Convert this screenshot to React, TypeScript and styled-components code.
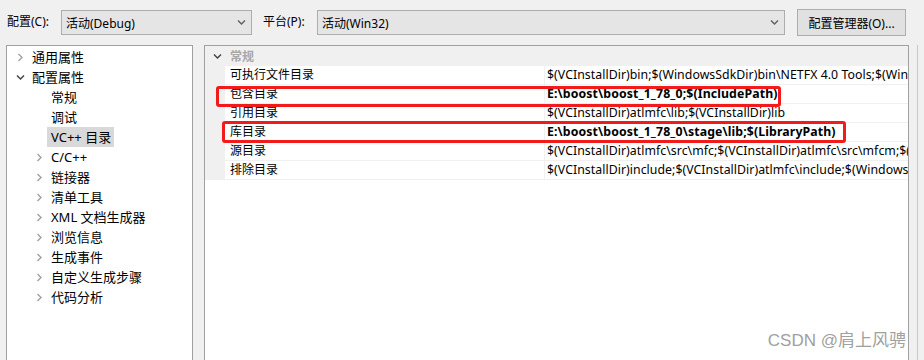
import styled, { createGlobalStyle } from "styled-components"

const GlobalStyle = createGlobalStyle`
  html, body {
    margin: 0;
    padding: 0;
    background: #f0f0f0;
  }
  body {
    font-family: "Noto Sans", "Noto Sans CJK SC", sans-serif;
    font-size: 12px;
    color: #000;
  }
`

const treeItems: { label: string; level: number; arrow: "open" | "closed" | "none"; selected?: boolean }[] = [
  { label: "通用属性", level: 0, arrow: "closed" },
  { label: "配置属性", level: 0, arrow: "open" },
  { label: "常规", level: 1, arrow: "none" },
  { label: "调试", level: 1, arrow: "none" },
  { label: "VC++ 目录", level: 1, arrow: "none", selected: true },
  { label: "C/C++", level: 1, arrow: "closed" },
  { label: "链接器", level: 1, arrow: "closed" },
  { label: "清单工具", level: 1, arrow: "closed" },
  { label: "XML 文档生成器", level: 1, arrow: "closed" },
  { label: "浏览信息", level: 1, arrow: "closed" },
  { label: "生成事件", level: 1, arrow: "closed" },
  { label: "自定义生成步骤", level: 1, arrow: "closed" },
  { label: "代码分析", level: 1, arrow: "closed" },
]

const props: { name: string; value: string; bold?: boolean }[] = [
  { name: "可执行文件目录", value: "$(VCInstallDir)bin;$(WindowsSdkDir)bin\\NETFX 4.0 Tools;$(WindowsSdkDir)bin;$(VSInstallDir)Common7\\Tools\\bin" },
  { name: "包含目录", value: "E:\\boost\\boost_1_78_0;$(IncludePath)", bold: true },
  { name: "引用目录", value: "$(VCInstallDir)atlmfc\\lib;$(VCInstallDir)lib" },
  { name: "库目录", value: "E:\\boost\\boost_1_78_0\\stage\\lib;$(LibraryPath)", bold: true },
  { name: "源目录", value: "$(VCInstallDir)atlmfc\\src\\mfc;$(VCInstallDir)atlmfc\\src\\mfcm;$(VCInstallDir)atlmfc\\src\\atl" },
  { name: "排除目录", value: "$(VCInstallDir)include;$(VCInstallDir)atlmfc\\include;$(WindowsSdkDir)include;$(FrameworkSDKDir)include" },
]

const Chevron = (p: { open?: boolean; color: string }) => (
  <svg width="9" height="9" viewBox="0 0 9 9">
    {p.open ? (
      <path d="M1 2.5 L4.5 6 L8 2.5" fill="none" stroke={p.color} strokeWidth="1.4" />
    ) : (
      <path d="M2.5 1 L6 4.5 L2.5 8" fill="none" stroke={p.color} strokeWidth="1.4" />
    )}
  </svg>
)

export default function App() {
  return (
    <Page>
      <GlobalStyle />
      <TopBar>
        <Label>配置(C):</Label>
        <Select width={191}>
          <span>活动(Debug)</span>
          <Chevron open color="#606060" />
        </Select>
        <Label>平台(P):</Label>
        <Select width={468}>
          <span>活动(Win32)</span>
          <Chevron open color="#606060" />
        </Select>
        <Button>配置管理器(O)...</Button>
      </TopBar>

      <Body>
        <TreePanel>
          {treeItems.map(item => (
            <TreeRow key={item.label} level={item.level}>
              <ArrowSlot>
                {item.arrow !== "none" && <Chevron open={item.arrow === "open"} color={item.arrow === "open" ? "#404040" : "#a0a0a0"} />}
              </ArrowSlot>
              <TreeLabel selected={item.selected}>{item.label}</TreeLabel>
            </TreeRow>
          ))}
        </TreePanel>

        <GridPanel>
          <CategoryRow>
            <ArrowSlot>
              <Chevron open color="#404040" />
            </ArrowSlot>
            <CategoryLabel>常规</CategoryLabel>
          </CategoryRow>
          {props.map(p => (
            <PropRow key={p.name}>
              <Margin />
              <NameCell>{p.name}</NameCell>
              <ValueCell bold={p.bold}>{p.value}</ValueCell>
            </PropRow>
          ))}
          <Highlight style={{ left: 11, top: 40, width: 565, height: 21 }} />
          <Highlight style={{ left: 17, top: 75, width: 624, height: 22 }} />
          <Watermark>CSDN @肩上风骋</Watermark>
        </GridPanel>
        <WindowEdge />
      </Body>
    </Page>
  )
}

const Page = styled.div`
  width: 924px;
  height: 360px;
  background: #f0f0f0;
  overflow: hidden;
  display: flex;
  flex-direction: column;
`

const TopBar = styled.div`
  height: 45px;
  display: flex;
  align-items: center;
  padding: 0 0 0 7px;
  box-sizing: border-box;
  flex: none;
`

const Label = styled.div`
  width: 54px;
  font-size: 12px;
  line-height: 16px;
  margin-top: -1px;
`

const Select = styled.div<{ width: number }>`
  width: ${p => p.width}px;
  height: 25px;
  box-sizing: border-box;
  border: 1px solid #adadad;
  background: #e5e5e5;
  display: flex;
  align-items: center;
  justify-content: space-between;
  padding: 0 5px 0 4px;
  margin-right: 11px;
  font-size: 12px;
`

const Button = styled.div`
  width: 109px;
  height: 27px;
  box-sizing: border-box;
  border: 1px solid #adadad;
  background: #e1e1e1;
  display: flex;
  align-items: center;
  justify-content: center;
  font-size: 12px;
  margin-left: 1px;
`

const Body = styled.div`
  flex: 1;
  display: flex;
  padding-left: 6px;
  min-height: 0;
`

const TreePanel = styled.div`
  width: 187px;
  flex: none;
  box-sizing: border-box;
  border: 1px solid #a0a0a0;
  border-bottom: none;
  background: #fff;
  padding-top: 1px;
`

const TreeRow = styled.div<{ level: number }>`
  height: 20px;
  display: flex;
  align-items: center;
  padding-left: ${p => 9 + p.level * 19}px;
`

const ArrowSlot = styled.div`
  width: 14px;
  display: flex;
  align-items: center;
  flex: none;
`

const TreeLabel = styled.div<{ selected?: boolean }>`
  font-size: 13px;
  line-height: 20px;
  padding: 0 3px 0 2px;
  margin-left: ${p => (p.selected ? "-2px" : "0")};
  padding-left: ${p => (p.selected ? "4px" : "2px")};
  background: ${p => (p.selected ? "#d9d9d9" : "transparent")};
  white-space: nowrap;
`

const GridPanel = styled.div`
  position: relative;
  margin-left: 11px;
  width: 705px;
  flex: none;
  box-sizing: border-box;
  border: 1px solid #a0a0a0;
  border-bottom: none;
  background: #fff;
  overflow: hidden;
`

const CategoryRow = styled.div`
  height: 20px;
  background: #f0f0f0;
  display: flex;
  align-items: center;
  padding-left: 8px;
`

const CategoryLabel = styled.div`
  color: #a8a8a8;
  font-size: 12px;
  font-weight: 700;
  margin-left: 3px;
`

const PropRow = styled.div`
  height: 19px;
  display: flex;
`

const Margin = styled.div`
  width: 20px;
  flex: none;
  background: #f0f0f0;
`

const NameCell = styled.div`
  width: 320px;
  flex: none;
  box-sizing: border-box;
  padding-left: 5px;
  line-height: 18px;
  font-size: 12px;
  border-bottom: 1px solid #f0f0f0;
  border-right: 1px solid #f0f0f0;
  white-space: nowrap;
`

const ValueCell = styled.div<{ bold?: boolean }>`
  flex: 1;
  min-width: 0;
  box-sizing: border-box;
  padding-left: 2px;
  line-height: 18px;
  font-size: 12.3px;
  letter-spacing: ${p => (p.bold ? "0.12px" : "0.05px")};
  font-weight: ${p => (p.bold ? 700 : 400)};
  border-bottom: 1px solid #f0f0f0;
  white-space: nowrap;
  overflow: hidden;
`

const Highlight = styled.div`
  position: absolute;
  box-sizing: border-box;
  border: 3px solid #f21b1b;
  border-radius: 3px;
`

const Watermark = styled.div`
  position: absolute;
  right: 2px;
  bottom: 9px;
  font-size: 17px;
  color: #a0a0a0;
  font-family: "Liberation Sans", "Noto Sans CJK SC", sans-serif;
`

const WindowEdge = styled.div`
  width: 8px;
  flex: none;
  border-right: 1px solid #c8c8c8;
`
